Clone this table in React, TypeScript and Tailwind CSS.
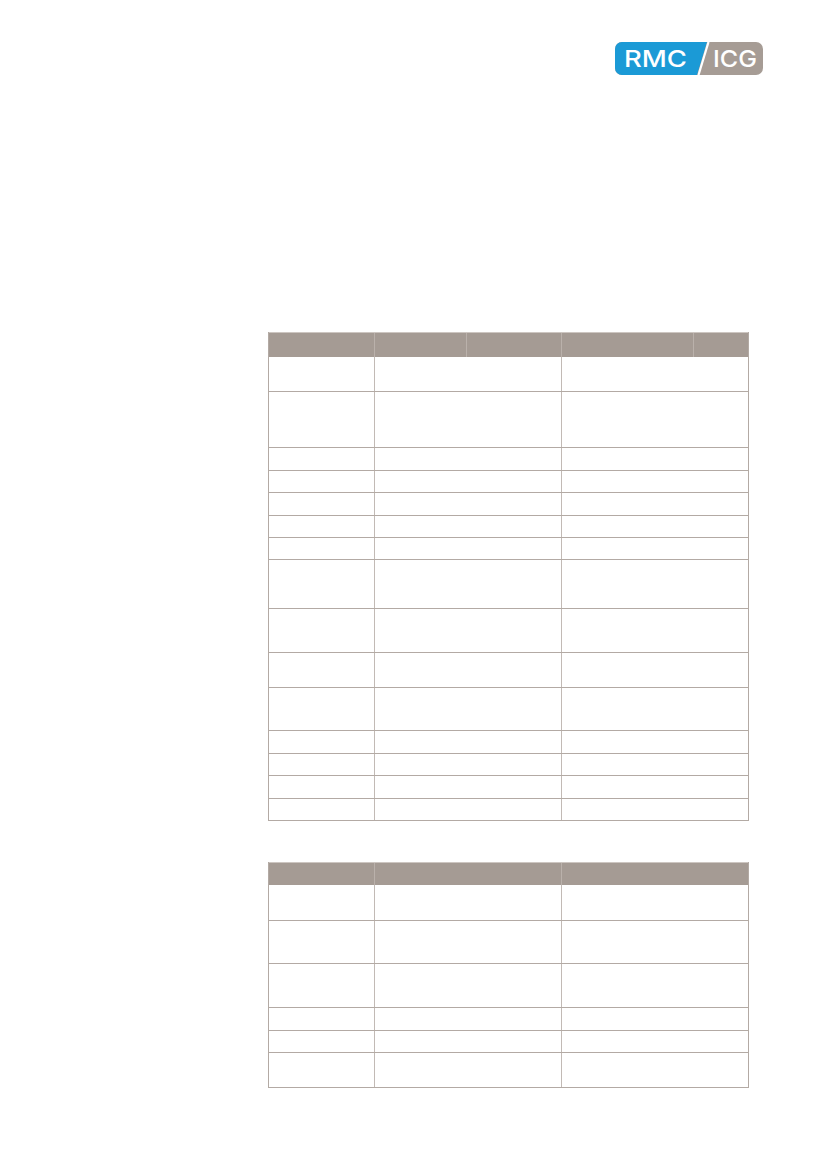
import React from 'react';

// Row heights in px (box includes the 1px bottom rule)
const TABLE_ONE_ROWS = [35, 56, 23, 22, 23, 22, 22, 49, 44, 35, 43, 23, 22, 23, 22];
const TABLE_TWO_ROWS = [36, 43, 44, 23, 22, 35];

function Logo() {
  return (
    <svg width="148" height="33" viewBox="0 0 148 33" aria-label="RMC/ICG">
      <defs>
        <clipPath id="logo-clip">
          <rect x="0" y="0" width="148" height="33" rx="7" ry="7" />
        </clipPath>
      </defs>
      <g clipPath="url(#logo-clip)">
        <rect x="0" y="0" width="148" height="33" fill="#a69c95" />
        <polygon points="0,0 92,0 82,33 0,33" fill="#1b9ad6" />
        <line x1="83.5" y1="33" x2="93.5" y2="0" stroke="#ffffff" strokeWidth="2.2" />
      </g>
      <text
        x="9"
        y="25"
        fill="#ffffff"
        fontFamily="Inter, 'Noto Sans', sans-serif"
        fontSize="23.5"
        fontWeight="500"
        textLength="63"
        lengthAdjust="spacingAndGlyphs"
      >
        RMC
      </text>
      <text
        x="98"
        y="25"
        fill="#ffffff"
        fontFamily="Inter, 'Noto Sans', sans-serif"
        fontSize="23.5"
        fontWeight="500"
        textLength="44"
        lengthAdjust="spacingAndGlyphs"
      >
        ICG
      </text>
    </svg>
  );
}

function BodyRow({ height }: { height: number }) {
  return (
    <div className="flex border-b border-[#b3aaa4]" style={{ height }}>
      <div className="w-[106px] shrink-0 border-r border-[#c2bab5]" />
      <div className="w-[187px] shrink-0 border-r border-[#c2bab5]" />
      <div className="flex-1" />
    </div>
  );
}

function TableOne() {
  return (
    <div className="w-[481px] border-x border-[#b3aaa4]">
      <div className="flex h-[25px] bg-[#a59b94] border-t border-[#cdc6c1]">
        <div className="w-[106px] shrink-0 border-r border-[#bab1ab]" />
        <div className="w-[92px] shrink-0 border-r border-[#bab1ab]" />
        <div className="w-[95px] shrink-0 border-r border-[#bab1ab]" />
        <div className="w-[132px] shrink-0 border-r border-[#bab1ab]" />
        <div className="flex-1" />
      </div>
      {TABLE_ONE_ROWS.map((h, i) => (
        <BodyRow key={i} height={h} />
      ))}
    </div>
  );
}

function TableTwo() {
  return (
    <div className="w-[481px] border-x border-[#b3aaa4]">
      <div className="flex h-[23px] bg-[#a59b94] border-t border-[#cdc6c1]">
        <div className="w-[106px] shrink-0 border-r border-[#bab1ab]" />
        <div className="w-[187px] shrink-0 border-r border-[#bab1ab]" />
        <div className="flex-1" />
      </div>
      {TABLE_TWO_ROWS.map((h, i) => (
        <BodyRow key={i} height={h} />
      ))}
    </div>
  );
}

export default function App() {
  return (
    <div className="w-[827px] h-[1169px] bg-white overflow-hidden font-['Liberation_Sans',sans-serif]">
      <div className="flex justify-end pt-[42px] pr-[64px]">
        <Logo />
      </div>
      <div className="pl-[268px] pt-[257px] flex flex-col gap-[41px]">
        <TableOne />
        <TableTwo />
      </div>
    </div>
  );
}
